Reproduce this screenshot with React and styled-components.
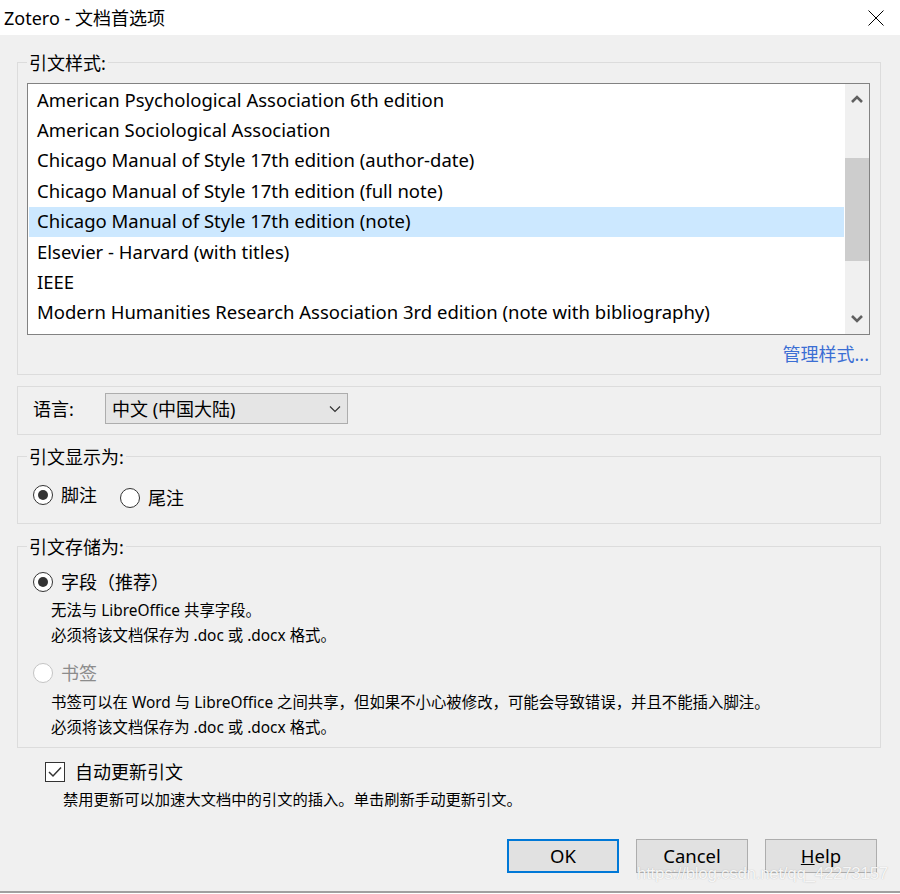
import styled, { createGlobalStyle } from "styled-components";

const GlobalStyle = createGlobalStyle`
  body {
    margin: 0;
    background: #ffffff;
    font-family: "Noto Sans", "Noto Sans CJK SC", sans-serif;
    color: #000000;
  }
`;

const Window = styled.div`
  width: 900px;
  height: 894px;
  background: #ffffff;
  display: flex;
  flex-direction: column;
  overflow: hidden;
`;

const TitleBar = styled.div`
  height: 35px;
  flex-shrink: 0;
  display: flex;
  align-items: center;
  justify-content: space-between;
  padding: 0 16px 0 4px;
  font-size: 18px;
  line-height: 20px;
`;

const Body = styled.div`
  position: relative;
  height: 856px;
  flex-shrink: 0;
  background: #f0f0f0;
  border-bottom: 2px solid #a0a0a0;
  padding: 0 19px 0 17px;
  display: flex;
  flex-direction: column;
`;

const Group = styled.div`
  flex-shrink: 0;
  border: 1px solid #dcdcdc;
  margin-top: ${(p) => p.$top}px;
  padding: ${(p) => p.$pad || "0 0 10px 0"};
`;

const Legend = styled.div`
  width: fit-content;
  height: 20px;
  margin: -10px 0 0 9px;
  padding: 0 2px;
  background: #f0f0f0;
  font-size: 18px;
  line-height: 20px;
`;

const ListBox = styled.div`
  margin: 10px 10px 0 9px;
  height: 252px;
  box-sizing: border-box;
  border: 1px solid #828282;
  background: #ffffff;
  display: flex;
`;

const Rows = styled.div`
  flex: 1;
  padding: 1px;
  overflow: hidden;
`;

const Row = styled.div`
  height: 30.4px;
  box-sizing: border-box;
  padding: 0 0 1px 8px;
  display: flex;
  align-items: center;
  font-size: 18.5px;
  line-height: 20px;
  white-space: nowrap;
  background: ${(p) => (p.$selected ? "#cce8ff" : "transparent")};
`;

const ScrollBar = styled.div`
  width: 24px;
  background: #f0f0f0;
  display: flex;
  flex-direction: column;
`;

const ScrollArrow = styled.div`
  height: 30px;
  display: flex;
  align-items: center;
  justify-content: center;
`;

const Thumb = styled.div`
  margin-top: 44px;
  height: 103px;
  background: #cdcdcd;
`;

const Spacer = styled.div`
  flex: 1;
`;

const LinkRow = styled.div`
  height: 20px;
  margin-top: 9px;
  padding-right: 11px;
  text-align: right;
  font-size: 18px;
  line-height: 20px;
  color: #3b6ed4;
`;

const LangRow = styled.div`
  display: flex;
  align-items: center;
  height: 31px;
  padding-left: 15px;
`;

const LangLabel = styled.div`
  width: 72px;
  font-size: 18px;
  line-height: 20px;
`;

const Select = styled.div`
  width: 243px;
  height: 31px;
  box-sizing: border-box;
  border: 1px solid #adadad;
  background: #e5e5e5;
  display: flex;
  align-items: center;
  justify-content: space-between;
  padding: 0 6px 0 6px;
  font-size: 18px;
  line-height: 20px;
`;

const RadioRow = styled.div`
  display: flex;
  align-items: flex-start;
  height: 23px;
  gap: ${(p) => p.$gap || 0}px;
  margin-top: ${(p) => p.$top || 0}px;
  padding-left: 15px;
`;

const RadioItem = styled.label`
  display: flex;
  align-items: center;
  gap: 8px;
  height: 20px;
  margin-top: ${(p) => p.$shift || 0}px;
  font-size: 18px;
  line-height: 20px;
  color: ${(p) => (p.$disabled ? "#8c8c8c" : "#000000")};
`;

const Circle = styled.span`
  width: 20px;
  height: 20px;
  box-sizing: border-box;
  border-radius: 50%;
  border: 1px solid ${(p) => (p.$disabled ? "#c4c4c4" : "#333333")};
  background: #ffffff;
  display: flex;
  align-items: center;
  justify-content: center;

  &::after {
    content: "";
    display: ${(p) => (p.$checked ? "block" : "none")};
    width: 10px;
    height: 10px;
    border-radius: 50%;
    background: #333333;
  }
`;

const Option = styled.div`
  margin-top: ${(p) => p.$top || 0}px;
  padding-left: 15px;
`;

const DescBlock = styled.div`
  margin-top: ${(p) => p.$top || 0}px;
`;

const Desc = styled.div`
  height: 25px;
  padding-left: 18px;
  font-size: 15.4px;
  line-height: 25px;
  white-space: nowrap;
`;

const CheckRow = styled.label`
  display: flex;
  align-items: center;
  gap: 10px;
  margin: 14px 0 0 28px;
  height: 20px;
  font-size: 18px;
  line-height: 20px;
`;

const Box = styled.span`
  width: 20px;
  height: 20px;
  box-sizing: border-box;
  border: 1px solid #333333;
  background: #ffffff;
  display: flex;
  align-items: center;
  justify-content: center;
`;

const CheckDesc = styled.div`
  height: 20px;
  margin: 7px 0 0 46px;
  font-size: 15.3px;
  line-height: 20px;
`;

const Buttons = styled.div`
  display: flex;
  justify-content: flex-end;
  gap: 17px;
  margin: 30px 4px 0 0;
`;

const Button = styled.button`
  width: 112px;
  height: 34px;
  box-sizing: border-box;
  background: #e1e1e1;
  border: ${(p) => (p.$primary ? "2px solid #0078d7" : "1px solid #adadad")};
  font-family: inherit;
  font-size: 18.5px;
  line-height: 20px;
  color: #000000;
  padding: 0;

  u {
    text-decoration-thickness: 1px;
  }
`;

const Watermark = styled.div`
  position: absolute;
  right: 12px;
  bottom: 7px;
  font-family: "Liberation Sans", Arial, sans-serif;
  font-size: 17px;
  line-height: 20px;
  color: rgba(255, 255, 255, 0.9);
  text-shadow: 0 0 1px rgba(120, 120, 120, 0.5);
  letter-spacing: -0.3px;
`;

const styles = [
  "American Psychological Association 6th edition",
  "American Sociological Association",
  "Chicago Manual of Style 17th edition (author-date)",
  "Chicago Manual of Style 17th edition (full note)",
  "Chicago Manual of Style 17th edition (note)",
  "Elsevier - Harvard (with titles)",
  "IEEE",
  "Modern Humanities Research Association 3rd edition (note with bibliography)",
];

const Chevron = ({ up }) => (
  <svg width="12" height="8" viewBox="0 0 12 8">
    <path
      d={up ? "M1 7 L6 2 L11 7" : "M1 1 L6 6 L11 1"}
      fill="none"
      stroke="#606060"
      strokeWidth="2.6"
    />
  </svg>
);

const Radio = ({ checked, disabled, shift, children }) => (
  <RadioItem $disabled={disabled} $shift={shift}>
    <Circle $checked={checked} $disabled={disabled} />
    {children}
  </RadioItem>
);

const App = () => {
  return (
    <Window>
      <GlobalStyle />
      <TitleBar>
        <span>Zotero - 文档首选项</span>
        <svg width="16" height="16" viewBox="0 0 16 16">
          <path d="M0.5 0.5 L15.5 15.5 M15.5 0.5 L0.5 15.5" stroke="#000" strokeWidth="1" />
        </svg>
      </TitleBar>
      <Body>
        <Group $top={27}>
          <Legend>引文样式:</Legend>
          <ListBox>
            <Rows>
              {styles.map((s, i) => (
                <Row key={s} $selected={i === 4}>
                  {s}
                </Row>
              ))}
            </Rows>
            <ScrollBar>
              <ScrollArrow>
                <Chevron up />
              </ScrollArrow>
              <Thumb />
              <Spacer />
              <ScrollArrow>
                <Chevron />
              </ScrollArrow>
            </ScrollBar>
          </ListBox>
          <LinkRow>管理样式...</LinkRow>
        </Group>

        <Group $top={11} $pad="6px 0 10px 0">
          <LangRow>
            <LangLabel>语言:</LangLabel>
            <Select>
              <span>中文 (中国大陆)</span>
              <svg width="12" height="8" viewBox="0 0 12 8">
                <path d="M1 1.5 L6 6.5 L11 1.5" fill="none" stroke="#333" strokeWidth="1.2" />
              </svg>
            </Select>
          </LangRow>
        </Group>

        <Group $top={21} $pad="0 0 15px 0">
          <Legend>引文显示为:</Legend>
          <RadioRow $top={18} $gap={23}>
            <Radio checked>脚注</Radio>
            <Radio shift={3}>尾注</Radio>
          </RadioRow>
        </Group>

        <Group $top={22} $pad="0 0 7px 0">
          <Legend>引文存储为:</Legend>
          <Option $top={15}>
            <Radio checked>字段（推荐）</Radio>
            <DescBlock $top={6}>
              <Desc>无法与 LibreOffice 共享字段。</Desc>
              <Desc>必须将该文档保存为 .doc 或 .docx 格式。</Desc>
            </DescBlock>
          </Option>
          <Option $top={15}>
            <Radio disabled>书签</Radio>
            <DescBlock $top={7}>
              <Desc>
                书签可以在 Word 与 LibreOffice 之间共享，但如果不小心被修改，可能会导致错误，并且不能插入脚注。
              </Desc>
              <Desc>必须将该文档保存为 .doc 或 .docx 格式。</Desc>
            </DescBlock>
          </Option>
        </Group>

        <CheckRow>
          <Box>
            <svg width="14" height="12" viewBox="0 0 14 12">
              <path d="M1 6 L5 10 L13 1.5" fill="none" stroke="#333" strokeWidth="1.5" />
            </svg>
          </Box>
          自动更新引文
        </CheckRow>
        <CheckDesc>禁用更新可以加速大文档中的引文的插入。单击刷新手动更新引文。</CheckDesc>

        <Buttons>
          <Button $primary>OK</Button>
          <Button>Cancel</Button>
          <Button>
            <u>H</u>elp
          </Button>
        </Buttons>
        <Watermark>https://blog.csdn.net/qq_42273157</Watermark>
      </Body>
    </Window>
  );
};

export default App;
